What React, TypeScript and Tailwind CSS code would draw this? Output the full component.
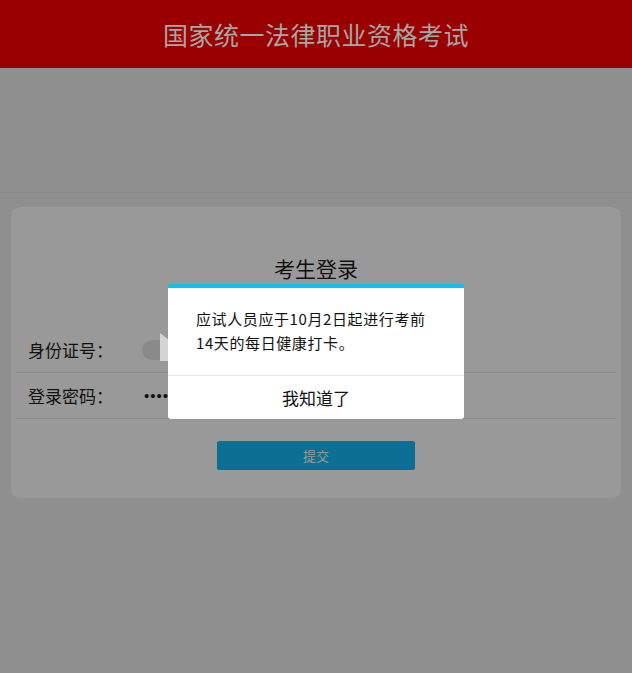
import React from "react";

const font = { fontFamily: '"Noto Sans CJK SC", "Noto Sans", sans-serif' };

export default function App() {
  return (
    <div className="relative min-h-[673px] w-full bg-[#8f8f8f] overflow-hidden" style={font}>
      <header className="h-[68px] bg-[#9b0000] flex items-center justify-center">
        <h1 className="text-[25px] leading-none text-[#a6a6a6] tracking-[0.5px]">国家统一法律职业资格考试</h1>
      </header>
      <div className="h-[125px] border-b border-[#888888]" />
      <div className="mx-[11px] mt-[14px] h-[291px] rounded-[9px] bg-[#999999] px-[5px]">
        <h2 className="pt-[47px] text-center text-[21px] leading-[28px] text-[#111]">考生登录</h2>
        <div className="mt-[45px]">
          <div className="flex h-[46px] items-center border-b border-[#8a8a8a] pl-[12px]">
            <span className="w-[114px] text-[17px] text-[#111]">身份证号：</span>
            <div className="relative h-[20px] w-[18px] rounded-l-[10px] bg-[#8a8a8a]" />
            <svg width="9" height="28" viewBox="0 0 9 28" className="-mt-[6px]">
              <polygon points="0,0 9,7 9,28 0,28" fill="#d4d4d4" />
            </svg>
          </div>
          <div className="flex h-[46px] items-center border-b border-[#8a8a8a] pl-[12px]">
            <span className="w-[116px] text-[17px] text-[#111]">登录密码：</span>
            <span className="font-['Liberation_Sans',sans-serif] text-[15px] leading-none tracking-[1px] text-[#111]">••••</span>
          </div>
        </div>
        <div className="mt-[22px] flex justify-center">
          <button className="h-[29px] w-[198px] rounded-[2px] bg-[#0b7094] text-[13px] text-[#9a9a9a]">提交</button>
        </div>
      </div>

      <div className="absolute left-[168px] top-[284px] w-[296px] rounded-[3px] border-t-[4px] border-[#12bdf2] bg-white">
        <p className="px-[28px] pt-[19px] pb-[20px] text-[15px] leading-[24px] tracking-[0.6px] text-[#111]">
          应试人员应于10月2日起进行考前
          <br />
          14天的每日健康打卡。
        </p>
        <div className="flex h-[44px] items-center justify-center border-t border-[#e6e6e6] text-[17px] text-[#111]">
          我知道了
        </div>
      </div>
    </div>
  );
}
